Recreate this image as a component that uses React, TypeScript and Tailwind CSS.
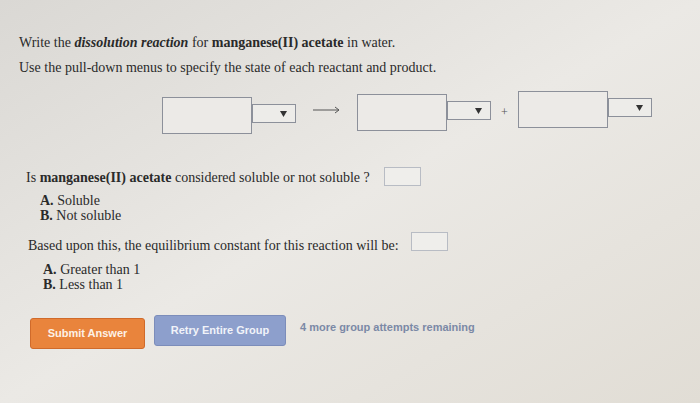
const serif = "font-['Liberation_Serif','Times_New_Roman',serif]";

function Field({ w = "w-[90px]" }: { w?: string }) {
  return <div className={`h-[37px] ${w} border border-[#8c909a] bg-[#eceae7]`} />;
}

function Select() {
  return (
    <div className="flex h-[19px] w-[44px] items-center justify-end border border-[#8c909a] bg-[#edece9] pr-[8px]">
      <svg width="7" height="6" viewBox="0 0 7 6">
        <path d="M0 0h7L3.5 6z" fill="#333" />
      </svg>
    </div>
  );
}

function Species() {
  return (
    <div className="flex items-start">
      <Field />
      <div className="mt-[7px]">
        <Select />
      </div>
    </div>
  );
}

function AnswerBox() {
  return <div className="h-[19px] w-[37px] border border-[#b8bcc4] bg-[#efeeeb]" />;
}

export default function App() {
  return (
    <div
      className={`h-[403px] w-[700px] overflow-hidden bg-gradient-to-br from-[#dad8d4] via-[#ebe9e5] to-[#e1ddd5] text-[14px] text-[#2a2a2a] ${serif}`}
    >
      <div className="pl-[19px] pt-[34px]">
        <p className="leading-[18px]">
          Write the <b><i>dissolution reaction</i></b> for <b>manganese(II) acetate</b> in water.
        </p>
        <p className="mt-[7px] leading-[18px]">
          Use the pull-down menus to specify the state of each reactant and product.
        </p>
      </div>

      <div className="mt-[20px] flex items-start pl-[162px]">
        <Species />
        <div className="mx-[17px] mt-[9px] flex items-center">
          <svg width="27" height="8" viewBox="0 0 27 8">
            <path d="M0 4h26M22 1l4 3-4 3" stroke="#555" strokeWidth="1" fill="none" />
          </svg>
        </div>
        <div className="-mt-[3px]">
          <Species />
        </div>
        <span className="mx-[10px] mt-[6px] text-[12px] text-[#555]">+</span>
        <div className="-mt-[6px]">
          <Species />
        </div>
      </div>

      <div className="mt-[33px] pl-[26px]">
        <div className="flex items-start">
          <p className="mt-[2px] leading-[18px]">
            Is <b>manganese(II) acetate</b> considered soluble or not soluble ?
          </p>
          <div className="ml-[14px]">
            <AnswerBox />
          </div>
        </div>
        <div className="mt-[6px] pl-[14px] leading-[15px]">
          <p><b>A.</b> Soluble</p>
          <p><b>B.</b> Not soluble</p>
        </div>
      </div>

      <div className="mt-[9px] pl-[28px]">
        <div className="flex items-start">
          <p className="mt-[5px] leading-[18px]">
            Based upon this, the equilibrium constant for this reaction will be:
          </p>
          <div className="ml-[12px]">
            <AnswerBox />
          </div>
        </div>
        <div className="mt-[7px] pl-[15px] leading-[15px]">
          <p><b>A.</b> Greater than 1</p>
          <p><b>B.</b> Less than 1</p>
        </div>
      </div>

      <div className="mt-[23px] flex items-start pl-[30px] font-['Liberation_Sans',Arial,sans-serif] text-[11px] font-bold">
        <button className="mt-[3px] h-[31px] w-[115px] rounded-[3px] border border-[#d06a2a] bg-[#e9843c] text-[#fdf1e6]">
          Submit Answer
        </button>
        <button className="ml-[9px] h-[31px] w-[132px] rounded-[3px] border border-[#7c8dba] bg-[#8d9fcc] text-[#f1f3f9]">
          Retry Entire Group
        </button>
        <span className="ml-[14px] mt-[4px] text-[#7b89a6]">4 more group attempts remaining</span>
      </div>
    </div>
  );
}
